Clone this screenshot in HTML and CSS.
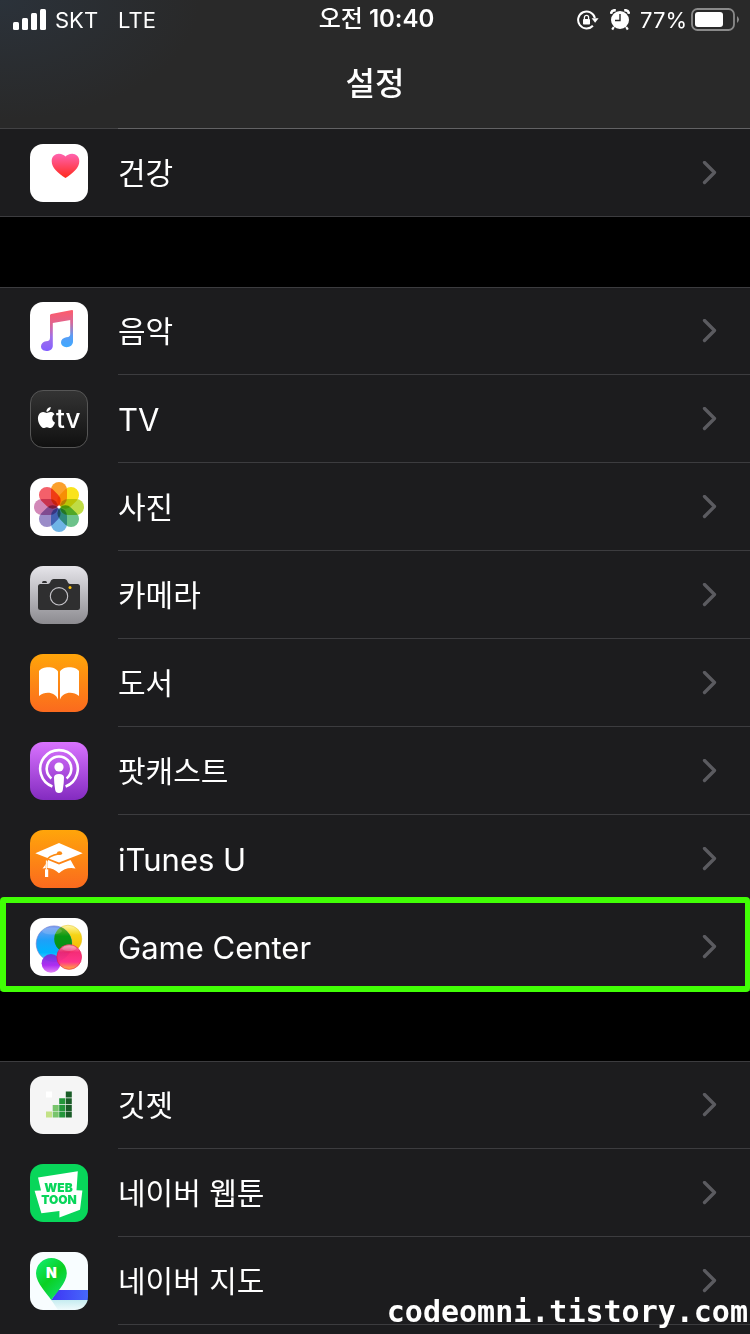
FILE: index.html
```html
<!DOCTYPE html>
<html lang="ko">
<head>
	<meta charset="utf-8">
	<meta name="viewport" content="width=device-width, initial-scale=1">
	<title>설정</title>
	<link rel="stylesheet" href="styles.css">
</head>

<body>
	<svg class="defs" width="0" height="0" aria-hidden="true">
		<defs>
			<symbol id="chevron" viewBox="0 0 16 24">
				<path d="M2.5 1.5 L12.5 11.5 L2.5 21.5" fill="none" stroke="#5b5b60" stroke-width="3.3" stroke-linecap="round" stroke-linejoin="round"/>
			</symbol>
			<linearGradient id="gHeart" x2="0" y2="1"><stop offset="0" stop-color="#ff63b0"/><stop offset="1" stop-color="#ff2a1c"/></linearGradient>
			<linearGradient id="gMusic" gradientUnits="userSpaceOnUse" x1="26" y1="10" x2="28" y2="48"><stop offset="0" stop-color="#fb5c6e"/><stop offset=".3" stop-color="#e0648f"/><stop offset=".65" stop-color="#a070e8"/><stop offset="1" stop-color="#8560ff"/></linearGradient>
			<linearGradient id="gMusic2" gradientUnits="userSpaceOnUse" x1="0" y1="8" x2="0" y2="45"><stop offset="0" stop-color="#fb5c6e"/><stop offset=".35" stop-color="#d46a9c"/><stop offset=".7" stop-color="#5a9cf5"/><stop offset="1" stop-color="#3fa9ff"/></linearGradient>
			<linearGradient id="gTv" x2="0" y2="1"><stop offset="0" stop-color="#343434"/><stop offset="1" stop-color="#101010"/></linearGradient>
			<linearGradient id="gCamera" x2="0" y2="1"><stop offset="0" stop-color="#e6e5ea"/><stop offset="1" stop-color="#8c8b90"/></linearGradient>
			<linearGradient id="gOrange" x2="0" y2="1"><stop offset="0" stop-color="#ffa50a"/><stop offset="1" stop-color="#fb6a1e"/></linearGradient>
			<linearGradient id="gPod" x2="0" y2="1"><stop offset="0" stop-color="#d973ff"/><stop offset="1" stop-color="#832bc0"/></linearGradient>
			<linearGradient id="gBlue" x2="0" y2="1"><stop offset="0" stop-color="#7f9df0"/><stop offset=".4" stop-color="#1ea0f8"/><stop offset=".75" stop-color="#00b4ff"/><stop offset="1" stop-color="#5cd6ff"/></linearGradient>
			<linearGradient id="gYellow" x2="0" y2="1"><stop offset="0" stop-color="#fff6a8"/><stop offset=".35" stop-color="#f5d416"/><stop offset="1" stop-color="#f8b400"/></linearGradient>
			<linearGradient id="gPink" x2="0" y2="1"><stop offset="0" stop-color="#ffa8c0"/><stop offset=".3" stop-color="#f5216f"/><stop offset=".7" stop-color="#ff2a86"/><stop offset="1" stop-color="#ffab2e"/></linearGradient>
			<linearGradient id="gPurple" x2="0" y2="1"><stop offset="0" stop-color="#6a35d8"/><stop offset=".6" stop-color="#a91ff0"/><stop offset="1" stop-color="#e07bf5"/></linearGradient>
			<linearGradient id="gGreen" x2="0" y2="1"><stop offset="0" stop-color="#7fae30"/><stop offset=".4" stop-color="#079a12"/><stop offset="1" stop-color="#0a8a1a"/></linearGradient>
			<linearGradient id="gPin" x2=".7" y2="1"><stop offset="0" stop-color="#12f07a"/><stop offset=".55" stop-color="#0ad022"/><stop offset="1" stop-color="#10e06a"/></linearGradient>
			<linearGradient id="gRoad"><stop offset="0" stop-color="#3e35f5"/><stop offset="1" stop-color="#4668fa"/></linearGradient>
			<linearGradient id="gGround" x2="0" y2="1"><stop offset="0" stop-color="#c5ecf0"/><stop offset="1" stop-color="#f0fbfc"/></linearGradient>
			<clipPath id="cTile"><rect width="58" height="58" rx="13"/></clipPath>
			<clipPath id="cBlue"><circle cx="24" cy="25.7" r="18"/></clipPath>
		</defs>
	</svg>

	<header class="top">
		<div class="status">
			<div class="status-left">
				<svg width="34" height="22" viewBox="0 0 34 22" fill="#fff">
					<rect x="0" y="13" width="6" height="8" rx="1.5"/>
					<rect x="9" y="9" width="6" height="12" rx="1.5"/>
					<rect x="18" y="4" width="6" height="17" rx="1.5"/>
					<rect x="27" y="0" width="6" height="21" rx="1.5"/>
				</svg>
				<span class="carrier">SKT</span>
				<span>LTE</span>
			</div>
			<div class="clock"><span class="ampm">오전</span> 10:40</div>
			<div class="status-right">
				<!-- 화면 회전 잠금 -->
				<svg class="lock" width="22" height="20" viewBox="0 0 22 20">
					<path d="M15.9 15.7 A8.5 8.5 0 1 1 17.9 8" fill="none" stroke="#fff" stroke-width="2"/>
					<path d="M14.6 8.3 H21.6 L18.1 12.8 Z" fill="#fff"/>
					<rect x="6" y="9" width="7" height="5.5" rx=".8" fill="#fff"/>
					<path d="M7.4 9 V7.4 a2.1 2.1 0 0 1 4.2 0 V9" fill="none" stroke="#fff" stroke-width="1.3"/>
				</svg>
				<!-- 알람 -->
				<svg class="alarm" width="20" height="22" viewBox="0 0 20 22">
					<circle cx="10" cy="11" r="9" fill="#fff"/>
					<path d="M1 4.8 Q1.4 1 5.8 1.2 M19 4.8 Q18.6 1 14.2 1.2" fill="none" stroke="#fff" stroke-width="2.6"/>
					<path d="M3.8 18 L2.2 20.6 M16.2 18 L17.8 20.6" stroke="#fff" stroke-width="2.2"/>
					<path d="M10 5 V11.5 H5" fill="none" stroke="#292929" stroke-width="1.4"/>
				</svg>
				<span class="percent">77%</span>
				<svg width="49" height="24" viewBox="0 0 49 24">
					<rect x="1" y="1" width="42" height="21" rx="5.5" fill="none" stroke="#8a8a8a" stroke-width="1.8"/>
					<rect x="4" y="4" width="28" height="15" rx="3" fill="#fff"/>
					<path d="M46 8 Q50 11.5 46 15 Z" fill="#8a8a8a"/>
				</svg>
			</div>
		</div>
		<h1>설정</h1>
	</header>

	<main>
		<nav class="group first">
			<a class="row" href="#">
				<svg class="icon" viewBox="0 0 58 58">
					<rect width="58" height="58" rx="13" fill="#fff"/>
					<path d="M35.5 34 C28 29 21.7 24 21.7 17.2 C21.7 12.5 25 9.7 28.8 9.7 C32 9.7 34.3 11.2 35.5 12.6 C36.7 11.2 39 9.7 42.2 9.7 C46 9.7 49.3 12.5 49.3 17.2 C49.3 24 43 29 35.5 34 Z" fill="url(#gHeart)"/>
				</svg>
				<span class="label">건강</span>
				<svg class="chevron"><use href="#chevron"/></svg>
			</a>
		</nav>

		<nav class="group">
			<a class="row" href="#">
				<svg class="icon" viewBox="0 0 58 58">
					<rect width="58" height="58" rx="13" fill="#fff"/>
					<path d="M20 13.5 Q20 12.2 21.2 12 L42 8 Q43 7.9 43 9 V15 L42 17.8 L22.8 21 V44 C22.8 47 20 49 16.3 49 C13 49 11 47 11 44.3 C11 41.5 13.2 39.6 16 39.2 L18 38.9 Q20 38.5 20 36 Z" fill="url(#gMusic)"/>
					<path d="M40.2 14 L43 9 V39.5 C43 43 40 45.2 36.6 45.2 C33.3 45.2 31 43.2 31 40.3 C31 37.6 33.2 35.7 36.2 35.2 L38.3 34.9 Q40.2 34.5 40.2 32.5 Z" fill="url(#gMusic2)"/>
				</svg>
				<span class="label">음악</span>
				<svg class="chevron"><use href="#chevron"/></svg>
			</a>
			<a class="row" href="#">
				<svg class="icon" viewBox="0 0 58 58">
					<rect x=".5" y=".5" width="57" height="57" rx="12.5" fill="url(#gTv)" stroke="#565656"/>
					<path transform="translate(6 17) scale(.875)" fill="#fff" d="M12.152 6.896c-.948 0-2.415-1.078-3.96-1.04-2.04.027-3.91 1.183-4.961 3.014-2.117 3.675-.546 9.103 1.519 12.09 1.013 1.454 2.208 3.09 3.792 3.039 1.52-.065 2.09-.987 3.935-.987 1.831 0 2.35.987 3.96.948 1.637-.026 2.676-1.48 3.676-2.948 1.156-1.688 1.636-3.325 1.662-3.415-.039-.013-3.182-1.221-3.22-4.857-.026-3.04 2.48-4.494 2.597-4.559-1.429-2.09-3.623-2.324-4.39-2.376-2-.156-3.675 1.09-4.61 1.09zM15.53 3.83c.843-1.012 1.4-2.427 1.245-3.83-1.207.052-2.662.805-3.532 1.818-.78.896-1.454 2.338-1.273 3.714 1.338.104 2.715-.688 3.559-1.701"/>
					<text class="logo-tv" x="26" y="38">tv</text>
				</svg>
				<span class="label latin">TV</span>
				<svg class="chevron"><use href="#chevron"/></svg>
			</a>
			<a class="row" href="#">
				<svg class="icon petals" viewBox="0 0 58 58">
					<rect width="58" height="58" rx="13" fill="#fff"/>
					<g>
						<rect x="21" y="4" width="16" height="24" rx="8" fill="#fba02c"/>
						<rect x="21" y="4" width="16" height="24" rx="8" fill="#fae31c" transform="rotate(45 29 29)"/>
						<rect x="21" y="4" width="16" height="24" rx="8" fill="#bfdc45" transform="rotate(90 29 29)"/>
						<rect x="21" y="4" width="16" height="24" rx="8" fill="#6cc28a" transform="rotate(135 29 29)"/>
						<rect x="21" y="4" width="16" height="24" rx="8" fill="#6fb4e6" transform="rotate(180 29 29)"/>
						<rect x="21" y="4" width="16" height="24" rx="8" fill="#9a8cc8" transform="rotate(225 29 29)"/>
						<rect x="21" y="4" width="16" height="24" rx="8" fill="#d288b8" transform="rotate(270 29 29)"/>
						<rect x="21" y="4" width="16" height="24" rx="8" fill="#f4606a" transform="rotate(315 29 29)"/>
					</g>
					<circle cx="29" cy="29" r="1.6" fill="#fff"/>
				</svg>
				<span class="label">사진</span>
				<svg class="chevron"><use href="#chevron"/></svg>
			</a>
			<a class="row" href="#">
				<svg class="icon" viewBox="0 0 58 58">
					<rect width="58" height="58" rx="13" fill="url(#gCamera)"/>
					<path d="M10.5 18 H18 Q19.5 18 20.2 16.3 L21 14.5 Q21.8 13 23.6 13 H34.4 Q36.2 13 37 14.5 L37.8 16.3 Q38.5 18 40 18 H47.5 Q50 18 50 20.5 V41.5 Q50 44 47.5 44 H10.5 Q8 44 8 41.5 V20.5 Q8 18 10.5 18 Z" fill="#2f2f30"/>
					<path d="M12 17 Q12 15 13.5 15 H15.5 Q17 15 17 17 Z" fill="#2f2f30"/>
					<circle cx="29" cy="30.3" r="8.7" fill="none" stroke="#c4c3c8" stroke-width="1.1"/>
					<circle cx="40" cy="21.4" r="1.5" fill="#ffc20a"/>
				</svg>
				<span class="label">카메라</span>
				<svg class="chevron"><use href="#chevron"/></svg>
			</a>
			<a class="row" href="#">
				<svg class="icon" viewBox="0 0 58 58">
					<rect width="58" height="58" rx="13" fill="url(#gOrange)"/>
					<path d="M9 17 C12 12 25 11.5 28 17.5 V45.6 C25.5 38.5 16 36.5 9 42 Z M49 17 C46 12 33 11.5 30 17.5 V45.6 C32.5 38.5 42 36.5 49 42 Z" fill="#fff"/>
				</svg>
				<span class="label">도서</span>
				<svg class="chevron"><use href="#chevron"/></svg>
			</a>
			<a class="row" href="#">
				<svg class="icon" viewBox="0 0 58 58">
					<rect width="58" height="58" rx="13" fill="url(#gPod)"/>
					<path d="M22.4 44.5 A18.8 18.8 0 1 1 35.6 44.5" fill="none" stroke="#fff" stroke-width="2.6"/>
					<path d="M21.4 36.4 A12.3 12.3 0 1 1 36.6 36.4" fill="none" stroke="#fff" stroke-width="2.6"/>
					<circle cx="29" cy="25" r="4.6" fill="#fff"/>
					<path d="M24 35.5 Q24 32 29 32 Q34 32 34 35.5 Q34 41 32.8 48 Q32.3 51 29 51 Q25.7 51 25.2 48 Q24 41 24 35.5 Z" fill="#fff"/>
				</svg>
				<span class="label">팟캐스트</span>
				<svg class="chevron"><use href="#chevron"/></svg>
			</a>
			<a class="row" href="#">
				<svg class="icon" viewBox="0 0 58 58">
					<rect width="58" height="58" rx="13" fill="url(#gOrange)"/>
					<path d="M29 13 L52.7 23.3 L29 32.5 L5.3 23.3 Z" fill="#fff"/>
					<path d="M18 30 L29 34.6 L40.5 30 C42 32 43 35 45.5 38.5 Q36 36.5 29 43.3 Q22 36.5 12.5 38.5 C15 35.5 16.5 33 18 30 Z" fill="#fff"/>
					<path d="M29.3 23.8 C24 24.8 17.5 27 16.5 31 V39" fill="none" stroke="#fb8a12" stroke-width="1.6"/>
					<path d="M16.4 30.5 V39.5" stroke="#fff" stroke-width="1"/>
					<ellipse cx="29.5" cy="23.2" rx="2.6" ry="1.9" fill="#fb8a12"/>
					<rect x="15" y="39.3" width="3.2" height="7.7" fill="#fff"/>
				</svg>
				<span class="label latin">iTunes U</span>
				<svg class="chevron"><use href="#chevron"/></svg>
			</a>
			<a class="row marked" href="#">
				<svg class="icon" viewBox="0 0 58 58">
					<rect width="58" height="58" rx="13" fill="#fff"/>
					<circle cx="38" cy="21" r="13.8" fill="url(#gYellow)" stroke="#e0c020" stroke-width=".5"/>
					<circle cx="24" cy="25.7" r="17.8" fill="url(#gBlue)" stroke="#6a7ad0" stroke-width=".6"/>
					<circle cx="38" cy="21" r="13.8" fill="url(#gGreen)" clip-path="url(#cBlue)"/>
					<ellipse cx="22" cy="13" rx="10" ry="3.5" fill="#fff" opacity=".15"/>
					<circle cx="21" cy="45.3" r="9.4" fill="url(#gPurple)" opacity=".94"/>
					<circle cx="39.2" cy="39" r="12.4" fill="url(#gPink)" stroke="#e01440" stroke-width=".6" opacity=".95"/>
					<ellipse cx="39.2" cy="30.5" rx="7" ry="2.5" fill="#fff" opacity=".2"/>
				</svg>
				<span class="label latin">Game Center</span>
				<svg class="chevron"><use href="#chevron"/></svg>
			</a>
		</nav>

		<nav class="group last">
			<a class="row" href="#">
				<svg class="icon" viewBox="0 0 58 58">
					<rect width="58" height="58" rx="13" fill="#f5f5f5"/>
					<rect x="16" y="15.5" width="6" height="6" fill="#fff"/>
					<rect x="16" y="35.5" width="6" height="6" fill="#c3e286"/>
					<path d="M22.7 29h6v6h-6z M22.7 35.5h6v6h-6z" fill="#78c46c"/>
					<path d="M29.2 22.2h6v6h-6z M29.2 29h6v6h-6z M29.2 35.5h6v6h-6z" fill="#23963a"/>
					<path d="M35.8 15.5h6v6h-6z M35.8 22.2h6v6h-6z M35.8 29h6v6h-6z M35.8 35.5h6v6h-6z" fill="#195c27"/>
				</svg>
				<span class="label">깃젯</span>
				<svg class="chevron"><use href="#chevron"/></svg>
			</a>
			<a class="row" href="#">
				<svg class="icon" viewBox="0 0 58 58">
					<rect width="58" height="58" rx="13" fill="#08d65a"/>
					<path d="M8 13.5 L47.8 7.2 L46.5 26.3 L52.4 26.5 L50 45.8 L29.4 53.4 V47 L11.4 49.2 L4.6 26.7 L11 26.4 Z" fill="#fff"/>
					<text class="logo-web"><tspan x="28.5" y="28">WEB</tspan><tspan x="29" y="39.5">TOON</tspan></text>
				</svg>
				<span class="label">네이버 웹툰</span>
				<svg class="chevron"><use href="#chevron"/></svg>
			</a>
			<a class="row" href="#">
				<svg class="icon" viewBox="0 0 58 58">
					<g clip-path="url(#cTile)">
						<rect width="58" height="58" fill="#f8fdff"/>
						<path d="M21.3 48 H58 V58 H28 Z" fill="url(#gGround)"/>
						<path d="M21.3 48 L28 38 H58 V48 Z" fill="url(#gRoad)"/>
						<path d="M21.3 48.2 C17.5 42 6 31 6 21.3 A15.4 15.4 0 0 1 36.8 21.3 C36.8 31 25.1 42 21.3 48.2 Z" fill="url(#gPin)"/>
						<text class="logo-n" x="21.5" y="26">N</text>
					</g>
				</svg>
				<span class="label">네이버 지도</span>
				<svg class="chevron"><use href="#chevron"/></svg>
			</a>
		</nav>
	</main>

	<p class="watermark">codeomni.tistory.com</p>
</body>
</html>
```
FILE: styles.css
```css
* {
	box-sizing: border-box;
}
body {
	margin: 0;
	min-height: 100vh;
	display: flex;
	flex-direction: column;
	background: #000;
	color: #fff;
	font-family: Inter, "Noto Sans CJK KR", sans-serif;
}
.defs {
	position: absolute;
}

/* 상단 바 */
.top {
	position: relative;
	height: 129px;
	border-bottom: 1px solid #424244;
	background: radial-gradient(ellipse 200px 120px at 0 0, #2b323a, #292929);
}
.top::after {
	content: "";
	position: absolute;
	left: 118px;
	right: 0;
	bottom: -1px;
	height: 1px;
	background: #626264;
}
.status {
	display: grid;
	grid-template-columns: 1fr auto 1fr;
	align-items: center;
	height: 40px;
	padding: 0 10px 0 13px;
	font-size: 22px;
}
.status-left,
.status-right {
	display: flex;
	align-items: center;
}
.status-right {
	justify-content: flex-end;
}
.carrier {
	margin: 0 20px 0 8px;
}
.clock {
	font-size: 24px;
	line-height: 36px;
	font-weight: 600;
	padding-bottom: 2px;
}
.ampm {
	font-weight: 500;
}
.lock {
	margin-right: 11px;
}
.alarm {
	margin-right: 10px;
}
.percent {
	margin-right: 4px;
}
h1 {
	margin: 20px 0 0;
	font-size: 32px;
	line-height: 48px;
	font-weight: 500;
	text-align: center;
}

/* 목록 */
main {
	flex: 1;
	display: flex;
	flex-direction: column;
	gap: 70px;
}
.group {
	background: #1c1c1e;
	box-shadow: inset 0 1px #3c3c3f, inset 0 -1px #3c3c3f;
}
.first {
	box-shadow: inset 0 -1px #3c3c3f;
}
.last {
	flex: 1;
	box-shadow: inset 0 1px #3c3c3f;
}
.row {
	position: relative;
	display: flex;
	align-items: center;
	height: 88px;
	padding: 0 32px 0 30px;
	color: #fff;
	text-decoration: none;
}
.row::after {
	content: "";
	position: absolute;
	left: 118px;
	right: 0;
	bottom: 0;
	height: 1px;
	background: #3c3c3f;
}
.icon {
	width: 58px;
	height: 58px;
	margin-right: 30px;
}
.label {
	flex: 1;
	font-size: 30px;
	line-height: 44px;
}
.latin {
	padding-top: 2px;
	font-size: 31px;
}
.chevron {
	width: 16px;
	height: 24px;
}

/* 강조 표시 */
.marked::after {
	left: 0;
	top: -6px;
	bottom: -1px;
	height: auto;
	border: 6px solid #41ff05;
	border-right-width: 5px;
	border-radius: 4px;
	background: none;
}

/* 아이콘 안 글자 */
.petals g {
	isolation: isolate;
}
.petals g rect {
	mix-blend-mode: multiply;
}
.logo-tv {
	font-size: 26px;
	font-weight: 500;
	fill: #fff;
}
.logo-web {
	font-size: 12px;
	font-weight: 900;
	text-anchor: middle;
	fill: #08d65a;
}
.logo-n {
	font-size: 14px;
	font-weight: 900;
	text-anchor: middle;
	fill: #fff;
}

.watermark {
	position: fixed;
	right: 2px;
	bottom: 4px;
	margin: 0;
	font-family: "DejaVu Sans Mono", monospace;
	font-size: 30px;
	line-height: 36px;
	font-weight: bold;
}
```
